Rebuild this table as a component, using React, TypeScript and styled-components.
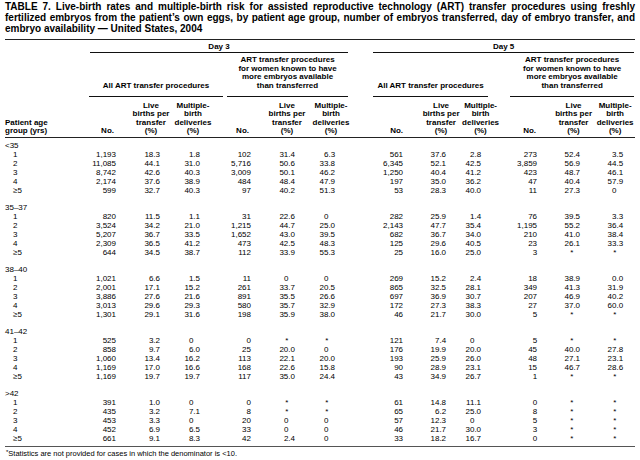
import React from 'react'
import styled, { createGlobalStyle } from 'styled-components'

const GlobalStyle = createGlobalStyle`
  html, body {
    margin: 0;
    padding: 0;
    background: #fff;
  }
  body {
    font-family: 'Liberation Sans', Arial, Helvetica, sans-serif;
    color: #000;
  }
`

type Col = { w: number; pad: number; head: string[]; align: 'center' | 'right'; hpad: number }

const cols: Col[] = [
  { w: 41, pad: 14, head: ['No.'], align: 'right', hpad: 16 },
  { w: 42, pad: 12, head: ['Live', 'births per', 'transfer', '(%)'], align: 'center', hpad: 0 },
  { w: 53, pad: 25, head: ['Multiple-', 'birth', 'deliveries', '(%)'], align: 'center', hpad: 11 },
  { w: 37, pad: 11, head: ['No.'], align: 'right', hpad: 13 },
  { w: 50, pad: 17, head: ['Live', 'births per', 'transfer', '(%)'], align: 'center', hpad: 0 },
  { w: 38, pad: 15, head: ['Multiple-', 'birth', 'deliveries', '(%)'], align: 'center', hpad: 0 },
  { w: 70, pad: 17, head: ['No.'], align: 'right', hpad: 17 },
  { w: 42, pad: 16, head: ['Live', 'births per', 'transfer', '(%)'], align: 'center', hpad: 0 },
  { w: 37, pad: 18, head: ['Multiple-', 'birth', 'deliveries', '(%)'], align: 'center', hpad: 0 },
  { w: 53, pad: 15, head: ['No.'], align: 'right', hpad: 16 },
  { w: 43, pad: 15, head: ['Live', 'births per', 'transfer', '(%)'], align: 'center', hpad: 0 },
  { w: 40, pad: 12, head: ['Multiple-', 'birth', 'deliveries', '(%)'], align: 'center', hpad: 0 },
]

// columns holding percentages are lined up on the decimal point
const pctCols = [1, 2, 4, 5, 7, 8, 10, 11]

const groups: { age: string; rows: string[][] }[] = [
  {
    age: '<35',
    rows: [
      ['1', '1,193', '18.3', '1.8', '102', '31.4', '6.3', '561', '37.6', '2.8', '273', '52.4', '3.5'],
      ['2', '11,085', '44.1', '31.0', '5,716', '50.6', '33.8', '6,345', '52.1', '42.5', '3,859', '56.9', '44.5'],
      ['3', '8,742', '42.6', '40.3', '3,009', '50.1', '46.2', '1,250', '40.4', '41.2', '423', '48.7', '46.1'],
      ['4', '2,174', '37.6', '38.9', '484', '48.4', '47.9', '197', '35.0', '36.2', '47', '40.4', '57.9'],
      ['≥5', '599', '32.7', '40.3', '97', '40.2', '51.3', '53', '28.3', '40.0', '11', '27.3', '0'],
    ],
  },
  {
    age: '35–37',
    rows: [
      ['1', '820', '11.5', '1.1', '31', '22.6', '0', '282', '25.9', '1.4', '76', '39.5', '3.3'],
      ['2', '3,524', '34.2', '21.0', '1,215', '44.7', '25.0', '2,143', '47.7', '35.4', '1,195', '55.2', '36.4'],
      ['3', '5,207', '36.7', '33.5', '1,652', '43.0', '39.5', '682', '36.7', '34.0', '210', '41.0', '38.4'],
      ['4', '2,309', '36.5', '41.2', '473', '42.5', '48.3', '125', '29.6', '40.5', '23', '26.1', '33.3'],
      ['≥5', '644', '34.5', '38.7', '112', '33.9', '55.3', '25', '16.0', '25.0', '3', '*', '*'],
    ],
  },
  {
    age: '38–40',
    rows: [
      ['1', '1,021', '6.6', '1.5', '11', '0', '0', '269', '15.2', '2.4', '18', '38.9', '0.0'],
      ['2', '2,001', '17.1', '15.2', '261', '33.7', '20.5', '865', '32.5', '28.1', '349', '41.3', '31.9'],
      ['3', '3,886', '27.6', '21.6', '891', '35.5', '26.6', '697', '36.9', '30.7', '207', '46.9', '40.2'],
      ['4', '3,013', '29.6', '29.3', '580', '35.7', '32.9', '172', '27.3', '38.3', '27', '37.0', '60.0'],
      ['≥5', '1,301', '29.1', '31.6', '198', '35.9', '38.0', '46', '21.7', '30.0', '5', '*', '*'],
    ],
  },
  {
    age: '41–42',
    rows: [
      ['1', '525', '3.2', '0', '0', '*', '*', '121', '7.4', '0', '5', '*', '*'],
      ['2', '858', '9.7', '6.0', '25', '20.0', '0', '176', '19.9', '20.0', '45', '40.0', '27.8'],
      ['3', '1,060', '13.4', '16.2', '113', '22.1', '20.0', '193', '25.9', '26.0', '48', '27.1', '23.1'],
      ['4', '1,169', '17.0', '16.6', '168', '22.6', '15.8', '90', '28.9', '23.1', '15', '46.7', '28.6'],
      ['≥5', '1,169', '19.7', '19.7', '117', '35.0', '24.4', '43', '34.9', '26.7', '1', '*', '*'],
    ],
  },
  {
    age: '>42',
    rows: [
      ['1', '391', '1.0', '0', '0', '*', '*', '61', '14.8', '11.1', '0', '*', '*'],
      ['2', '435', '3.2', '7.1', '8', '*', '*', '65', '6.2', '25.0', '8', '*', '*'],
      ['3', '453', '3.3', '0', '20', '0', '0', '57', '12.3', '0', '5', '*', '*'],
      ['4', '452', '6.9', '6.5', '33', '0', '0', '46', '21.7', '30.0', '3', '*', '*'],
      ['≥5', '661', '9.1', '8.3', '42', '2.4', '0', '33', '18.2', '16.7', '0', '*', '*'],
    ],
  },
]

const Page = styled.div`
  width: 640px;
  height: 460px;
  padding: 1px 5px 0 5px;
  box-sizing: border-box;
  overflow: hidden;
`

const Title = styled.h1`
  margin: 0;
  padding-bottom: 5px;
  font-size: 10px;
  line-height: 11px;
  font-weight: 700;
  border-bottom: 1.5px solid #222;
`

const TitleLine = styled.span<{ $full?: boolean }>`
  display: block;
  white-space: nowrap;
  text-align: left;
  text-align-last: ${p => (p.$full ? 'justify' : 'left')};
`

const Table = styled.table`
  width: 630px;
  border-collapse: collapse;
  table-layout: fixed;
  font-size: 8px;
`

const HeadCell = styled.th<{ $align?: string; $pad?: number; $top?: number; $bottom?: number }>`
  padding: ${p => p.$top ?? 0}px ${p => p.$pad ?? 0}px ${p => p.$bottom ?? 0}px 0;
  font-weight: 700;
  line-height: 8.4px;
  text-align: ${p => p.$align || 'center'};
  vertical-align: bottom;
  white-space: nowrap;
`

const Rule = styled.div<{ $l: number; $r: number; $gap: number }>`
  margin: 0 ${p => p.$r}px 0 ${p => p.$l}px;
  padding-bottom: ${p => p.$gap}px;
  border-bottom: 1px solid #111;
`

const HeadRow = styled.tr<{ $rule?: boolean }>`
  border-bottom: ${p => (p.$rule ? '1px solid #222' : 'none')};
`

const AgeCell = styled.td<{ $top: number }>`
  padding: ${p => p.$top}px 0 0 0;
  line-height: 9px;
  font-weight: 400;
`

const Cell = styled.td<{ $pad: number }>`
  padding: 0 ${p => p.$pad}px 0 0;
  line-height: 9px;
  text-align: right;
  white-space: nowrap;
`

const Label = styled.td`
  padding: 0 0 0 8px;
  line-height: 9px;
`

const Ghost = styled.span`
  visibility: hidden;
`

const FootRow = styled.tr`
  border-top: 1.5px solid #555;
`

const Note = styled.td`
  padding-top: 2px;
  font-size: 7.5px;
  line-height: 9px;
`

const Star = styled.sup`
  font-size: 6px;
  vertical-align: 2px;
  line-height: 0;
`

const Lines = ({ lines }: { lines: string[] }) => (
  <>
    {lines.map((l, i) => (
      <div key={i}>{l}</div>
    ))}
  </>
)

const Value = ({ v, pct }: { v: string; pct: boolean }) =>
  pct && !v.includes('.') ? (
    <>
      {v}
      <Ghost>.0</Ghost>
    </>
  ) : (
    <>{v}</>
  )

const knownLines = ['ART transfer procedures', 'for women known to have', 'more embryos available', 'than transferred']

export default function App() {
  return (
    <Page>
      <GlobalStyle />
      <Title>
        <TitleLine $full>
          TABLE 7. Live-birth rates and multiple-birth risk for assisted reproductive technology (ART) transfer procedures using freshly
        </TitleLine>
        <TitleLine $full>
          fertilized embryos from the patient’s own eggs, by patient age group, number of embryos transferred, day of embryo transfer, and
        </TitleLine>
        <TitleLine>embryo availability — United States, 2004</TitleLine>
      </Title>
      <Table>
        <colgroup>
          <col style={{ width: 84 }} />
          {cols.map((c, i) => (
            <col key={i} style={{ width: c.w }} />
          ))}
        </colgroup>
        <thead>
          <tr>
            <HeadCell />
            <HeadCell colSpan={6} $top={3}>
              <Rule $l={1} $r={2} $gap={1}>Day 3</Rule>
            </HeadCell>
            <HeadCell colSpan={6} $top={3}>
              <Rule $l={23} $r={1} $gap={1}>Day 5</Rule>
            </HeadCell>
          </tr>
          <tr>
            <HeadCell />
            <HeadCell colSpan={3} $top={3}>
              <Rule $l={0} $r={2} $gap={6}>All ART transfer procedures</Rule>
            </HeadCell>
            <HeadCell colSpan={3} $top={3}>
              <Rule $l={2} $r={2} $gap={6}>
                <Lines lines={knownLines} />
              </Rule>
            </HeadCell>
            <HeadCell colSpan={3} $top={3}>
              <Rule $l={23} $r={11} $gap={6}>All ART transfer procedures</Rule>
            </HeadCell>
            <HeadCell colSpan={3} $top={3}>
              <Rule $l={11} $r={1} $gap={6}>
                <Lines lines={knownLines} />
              </Rule>
            </HeadCell>
          </tr>
          <HeadRow $rule>
            <HeadCell $align="left" $top={5} $bottom={1.5}>
              <Lines lines={['Patient age', 'group (yrs)']} />
            </HeadCell>
            {cols.map((c, i) => (
              <HeadCell key={i} $align={c.align} $pad={c.hpad} $top={5} $bottom={1.5}>
                <Lines lines={c.head} />
              </HeadCell>
            ))}
          </HeadRow>
        </thead>
        <tbody>
          {groups.map((g, gi) => (
            <React.Fragment key={g.age}>
              <tr>
                <AgeCell colSpan={13} $top={gi === 0 ? 2.5 : 8}>
                  {g.age}
                </AgeCell>
              </tr>
              {g.rows.map(r => (
                <tr key={r[0]}>
                  <Label>{r[0]}</Label>
                  {r.slice(1).map((v, i) => (
                    <Cell key={i} $pad={cols[i].pad}>
                      <Value v={v} pct={pctCols.includes(i)} />
                    </Cell>
                  ))}
                </tr>
              ))}
            </React.Fragment>
          ))}
          <tr>
            <td colSpan={13} style={{ height: 1 }} />
          </tr>
        </tbody>
        <tfoot>
          <FootRow>
            <Note colSpan={13}>
              <Star>*</Star>Statistics are not provided for cases in which the denominator is &lt;10.
            </Note>
          </FootRow>
        </tfoot>
      </Table>
    </Page>
  )
}
